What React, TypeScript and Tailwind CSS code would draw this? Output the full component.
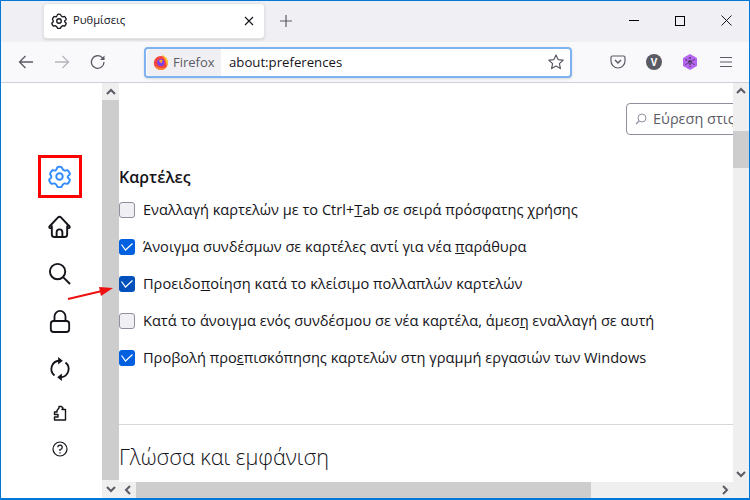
const font = { fontFamily: '"Open Sans", "Noto Sans", sans-serif' };

function TabGear({ className = "" }: { className?: string }) {
  return (
    <svg viewBox="0 0 24 24" fill="none" stroke="currentColor" strokeWidth="2" strokeLinejoin="round" className={className}>
      <path d="M9.700 2.500c.4-1 4.200-1 4.600 0 .4 1.300.9 2.500 2.800 3.300 1.300.3 2.500-.9 3.300-.4 1 .8 2.800 3.600 2.300 4.400-.6.900-2.200 1.200-2.200 2.700s1.600 1.800 2.200 2.700c.5.800-1.300 3.600-2.300 4.400-.8.500-2-.7-3.300-.4-1.900.8-2.400 2-2.800 3.300-.4 1-4.200 1-4.600 0-.4-1.300-.9-2.500-2.800-3.300-1.300-.3-2.500.9-3.300.4-1-.8-2.800-3.600-2.300-4.400.6-.9 2.200-1.200 2.200-2.700S2.900 10.700 2.300 9.800c-.5-.8 1.300-3.600 2.300-4.400.8-.5 2 .7 3.300.4 1-.7 1.400-2 1.800-3.300z" />
      <circle cx="12" cy="12" r="3.400" />
    </svg>
  );
}

function FirefoxLogo() {
  return (
    <svg viewBox="0 0 16 16" className="h-4 w-4 shrink-0">
      <circle cx="7.800" cy="9" r="7" fill="#f2443f" />
      <path d="M8.500 .5c3.500 1.500 6.500 4 6.500 8 0 1.500-.5 3-1.500 4C14 8 11.500 4 8.500 .5z" fill="#ffc02e" />
      <path d="M1.500 11.500C3 14.500 5.500 16 8 16s5-1.500 6-4c-2 2-4 2.500-6 2s-4.500-1-6.500-2.500z" fill="#ff8a2e" />
      <circle cx="7.800" cy="8.500" r="3.600" fill="#7b3ff2" />
      <path d="M6 6.500c1-1.200 3.200-1 4 .5-1 0-1.200.5-.6 1.500-1.200.8-3 0-3.400-2z" fill="#ffa02e" />
    </svg>
  );
}

function Checkbox({ checked, dark }: { checked: boolean; dark?: boolean }) {
  if (!checked) {
    return <div className="h-4 w-4 shrink-0 rounded-[3px] border border-[#8f8f9d] bg-[#f0f0f4]" />;
  }
  return (
    <div className={`flex h-4 w-4 shrink-0 items-center justify-center rounded-[3px] ${dark ? "bg-[#0250bb]" : "bg-[#0060df]"}`}>
      <svg viewBox="0 0 16 16" fill="none" stroke="white" strokeWidth="1.200" className="h-4 w-4">
        <path d="M2.500 5.500 6.500 11 13.500 4.500" />
      </svg>
    </div>
  );
}

function Option({ checked, dark, children }: { checked: boolean; dark?: boolean; children: React.ReactNode }) {
  return (
    <div className="flex h-[37px] items-center gap-2">
      <Checkbox checked={checked} dark={dark} />
      <span className="whitespace-nowrap pt-[1px] text-[14.600px] text-[#15141a]">{children}</span>
    </div>
  );
}

function ScrollChevron({ d, className = "" }: { d: string; className?: string }) {
  return (
    <svg viewBox="0 0 10 10" fill="none" stroke="#5b5b66" strokeWidth="2" className={`h-2.5 w-2.5 ${className}`}>
      <path d={d} />
    </svg>
  );
}

function SideIcon({ children, className = "" }: { children: React.ReactNode; className?: string }) {
  return <div className={`flex items-center justify-center ${className}`}>{children}</div>;
}

export default function App() {
  return (
    <div style={font} className="flex h-[500px] w-[750px] flex-col overflow-hidden border border-b-2 border-[#0078d7] bg-white text-[#15141a]">
      {/* title bar */}
      <div className="flex h-[41px] shrink-0 items-center bg-[#f0f0f4] pb-[2px]">
        <div className="ml-[42px] flex h-[36px] w-[222px] items-center rounded border border-[#e4e4e7] bg-white pl-[7px] pr-[10px] shadow-sm">
          <TabGear className="h-4 w-4" />
          <span className="ml-[6px] flex-1 text-[11.200px]">Ρυθμίσεις</span>
          <svg viewBox="0 0 10 10" stroke="#15141a" strokeWidth="1.100" className="h-2.5 w-2.5"><path d="M1 1l8 8M9 1l-8 8" /></svg>
        </div>
        <svg viewBox="0 0 14 14" stroke="#5b5b66" strokeWidth="1.200" className="ml-[14px] h-3.5 w-3.5"><path d="M7 1v12M1 7h12" /></svg>
        <div className="ml-auto flex items-center">
          <div className="flex h-8 w-[46px] items-center justify-center">
            <div className="h-[1px] w-2.5 bg-black" />
          </div>
          <div className="flex h-8 w-[46px] items-center justify-center">
            <div className="h-2.5 w-2.5 border border-black" />
          </div>
          <div className="flex h-8 w-[46px] items-center justify-center">
            <svg viewBox="0 0 11 11" stroke="black" strokeWidth="0.900" className="h-[11px] w-[11px]"><path d="M.5.500l10 10M10.500.500l-10 10" /></svg>
          </div>
        </div>
      </div>

      {/* toolbar */}
      <div className="flex h-[41px] shrink-0 items-center border-b border-[#cfcfd8] bg-[#f9f9fb]">
        <svg viewBox="0 0 16 16" fill="none" stroke="#5b5b66" strokeWidth="1.300" className="ml-[17px] h-4 w-4"><path d="M15 8H1.500M7.500 2 1.500 8l6 6" /></svg>
        <svg viewBox="0 0 16 16" fill="none" stroke="#b5b5bc" strokeWidth="1.300" className="ml-[20px] h-4 w-4"><path d="M1 8h13.500M8.500 2l6 6-6 6" /></svg>
        <svg viewBox="0 0 16 16" fill="none" stroke="#5b5b66" strokeWidth="1.300" className="ml-[20px] h-4 w-4"><path d="M14 8a6.300 6.300 0 1 1-1.800-4.400L14 5.500" /><path d="M14.500 1.500v4.500H10" fill="#5b5b66" stroke="none" /></svg>
        <div className="ml-[38px] flex h-[31px] w-[428px] items-center rounded border-2 border-[#7fb2f0] bg-white pl-[1px] pr-[6px] shadow-sm">
          <div className="flex h-[27px] w-[74px] items-center rounded-l-sm bg-[#f0f0f4] pl-[6px] text-[13px] text-[#5b5b66]">
            <FirefoxLogo />
            <span className="ml-[4px] pt-[2px]">Firefox</span>
          </div>
          <span className="ml-[8px] flex-1 pt-[2px] text-[13.200px] text-[#15141a]">about:preferences</span>
          <svg viewBox="0 0 16 16" fill="none" stroke="#5b5b66" strokeWidth="1.200" strokeLinejoin="round" className="h-4 w-4"><path d="m8 1 2.100 4.600 5 .6-3.700 3.400 1 5L8 12.100 3.600 14.600l1-5L.9 6.200l5-.6z" /></svg>
        </div>
        <svg viewBox="0 0 16 16" fill="none" stroke="#5b5b66" strokeWidth="1.200" className="ml-[38px] h-4 w-4"><path d="M2.500 2h11A1.500 1.500 0 0 1 15 3.500V7a7 7 0 0 1-14 0V3.500A1.500 1.500 0 0 1 2.500 2z" /><path d="M5 6l3 3 3-3" strokeWidth="1.500" /></svg>
        <div className="ml-[20px] flex h-4 w-4 items-center justify-center rounded-full bg-[#5b5b66] text-[10px] font-bold text-white">V</div>
        <svg viewBox="0 0 16 16" className="ml-[20px] h-4 w-4"><path d="M8 0l7 4v8l-7 4-7-4V4z" fill="#b565f0" /><path d="M8 3v10M3.500 5.500l9 5M12.500 5.500l-9 5" stroke="#2b2a33" strokeWidth="1" strokeDasharray="2 1" /></svg>
        <svg viewBox="0 0 14 12" stroke="#5b5b66" strokeWidth="1.200" className="ml-[21px] h-3 w-3.5"><path d="M1 1.500h12M1 6h12M1 10.500h12" /></svg>
      </div>

      {/* page */}
      <div className="flex min-h-0 flex-1">
        <div className="flex w-[101px] shrink-0 flex-col items-center bg-white pl-[16px]">
          <div className="relative mt-[72px] flex h-[43px] w-[44px] items-center justify-center border-[3px] border-[#ff0000]">
            <TabGear className="h-[23px] w-[23px] text-[#2f8bff]" />
          </div>
          <SideIcon className="mt-[17px] h-[23px]">
            <svg viewBox="0 0 24 24" fill="none" stroke="#15141a" strokeWidth="2" strokeLinejoin="round" className="h-[23px] w-[23px]"><path d="M1.500 12 10.500 2.500a2 2 0 0 1 3 0L22.500 12c.6 1-.5 2-1.500 1.500M3 13.500c-1 .5-2.100-.5-1.500-1.500M4 11v9a3 3 0 0 0 3 3h10a3 3 0 0 0 3-3v-9" /><path d="M9 23v-5a3 3 0 0 1 6 0v5" /></svg>
          </SideIcon>
          <SideIcon className="mt-[24px] h-[22px]">
            <svg viewBox="0 0 24 24" fill="none" stroke="#15141a" strokeWidth="2" className="h-[23px] w-[23px]"><circle cx="10" cy="10" r="8" /><path d="m16 16 7 7" /></svg>
          </SideIcon>
          <SideIcon className="mt-[25px] h-[24px]">
            <svg viewBox="0 0 24 26" fill="none" stroke="#15141a" strokeWidth="2" className="h-[24px] w-[22px]"><path d="M6 13V8a6 6 0 0 1 12 0v5" /><rect x="2" y="13" width="20" height="12" rx="3" /></svg>
          </SideIcon>
          <SideIcon className="mt-[24px] h-[24px]">
            <svg viewBox="0 0 24 26" fill="none" stroke="#15141a" strokeWidth="2" className="h-[24px] w-[22px]"><path d="M6 20A9 9 0 0 1 11 4M18 6a9 9 0 0 1-5 16" /><path d="M10 0v8l5-4zM14 18v8l-5-4z" fill="#15141a" stroke="none" /></svg>
          </SideIcon>
          <SideIcon className="mt-[24px] h-[16px]">
            <svg viewBox="0 0 16 16" fill="none" stroke="#15141a" strokeWidth="1.400" strokeLinejoin="round" className="h-4 w-4"><path d="M2.500 7H5V5.500L7 3V1.500h2.500L11 3l-1 1.500h3.500V15h-11v-3H6V9.500H2.500z" /></svg>
          </SideIcon>
          <SideIcon className="mt-[20px] h-[16px]">
            <svg viewBox="0 0 16 16" fill="none" stroke="#15141a" strokeWidth="1.200" className="h-4 w-4"><circle cx="8" cy="8" r="7" /><path d="M5.800 6.200A2.200 2.200 0 1 1 8 8.500v1.500" /><path d="M8 11.300v1.200" /></svg>
          </SideIcon>
        </div>

        <div className="flex w-[17px] shrink-0 flex-col bg-[#efefef]">
          <div className="flex h-[17px] items-center justify-center"><ScrollChevron d="M1 7l4-4 4 4" /></div>
          <div className="flex-1 bg-[#cdcdcd]" />
          <div className="flex h-[18px] items-center justify-center"><ScrollChevron d="M1 3l4 4 4-4" /></div>
        </div>

        <div className="flex min-w-0 flex-1 flex-col">
          <div className="flex min-h-0 flex-1">
            <div className="min-w-0 flex-1 overflow-hidden bg-white">
              <div className="flex justify-end">
                <div className="mt-[20px] flex h-8 w-[120px] shrink-0 translate-x-[13px] items-center rounded border border-[#8f8f9d] pl-[8px] text-[#5b5b66]">
                  <svg viewBox="0 0 12 12" fill="none" stroke="#8f8f9d" strokeWidth="1" className="h-3 w-3 shrink-0"><circle cx="7" cy="5" r="4" /><path d="M4 8 1 11" strokeWidth="1.300" /></svg>
                  <span className="ml-[6px] whitespace-nowrap text-[14.500px]">Εύρεση στις Ρυθμίσεις</span>
                </div>
              </div>
              <h2 className="mt-[30px] text-[16px] font-semibold leading-[24px]">Καρτέλες</h2>
              <div className="mt-[2px]">
                <Option checked={false}>Εναλλαγή καρτελών με το Ctrl+<u>T</u>ab σε σειρά πρόσφατης χρήσης</Option>
                <Option checked>Άνοιγμα συνδέσμων σε καρτέλες αντί για νέα <u>π</u>αράθυρα</Option>
                <Option checked dark>Προειδο<u>π</u>οίηση κατά το κλείσιμο πολλαπλών καρτελών</Option>
                <Option checked={false}>Κατά το άνοιγμα ενός συνδέσμου σε νέα καρτέλα, άμεσ<u>η</u> εναλλαγή σε αυτή</Option>
                <Option checked>Προβολή προ<u>ε</u>πισκόπησης καρτελών στη γραμμή εργασιών των Windows</Option>
              </div>
              <div className="mt-[48px] h-[1px] bg-[#d7d7db]" />
              <h2 className="mt-[16px] whitespace-nowrap text-[21.600px] font-light leading-[32px]">Γλώσσα και εμφάνιση</h2>
            </div>
            <div className="flex w-[16px] shrink-0 flex-col bg-[#efefef]">
              <div className="flex h-[15px] items-center justify-center"><ScrollChevron d="M1 7l4-4 4 4" /></div>
              <div className="mt-[33px] h-[37px] bg-[#cdcdcd]" />
              <div className="mt-auto flex h-[16px] items-center justify-center"><ScrollChevron d="M1 3l4 4 4-4" /></div>
            </div>
          </div>
          <div className="flex h-[16px] shrink-0 items-center bg-[#efefef]">
            <div className="flex w-[17px] items-center justify-center"><ScrollChevron d="M7 1 3 5l4 4" /></div>
            <div className="h-full w-[455px] bg-[#cdcdcd]" />
            <div className="ml-auto mr-[16px] flex w-[17px] items-center justify-center"><ScrollChevron d="M3 1l4 4-4 4" /></div>
          </div>
        </div>
      </div>

      {/* red annotation arrow */}
      <svg viewBox="0 0 50 20" className="absolute left-[66px] top-[284px] h-[20px] w-[50px]">
        <path d="M2 15 36 7" stroke="#ee1111" strokeWidth="2" />
        <path d="M47 4 33 3l2 9z" fill="#ee1111" />
      </svg>
    </div>
  );
}
